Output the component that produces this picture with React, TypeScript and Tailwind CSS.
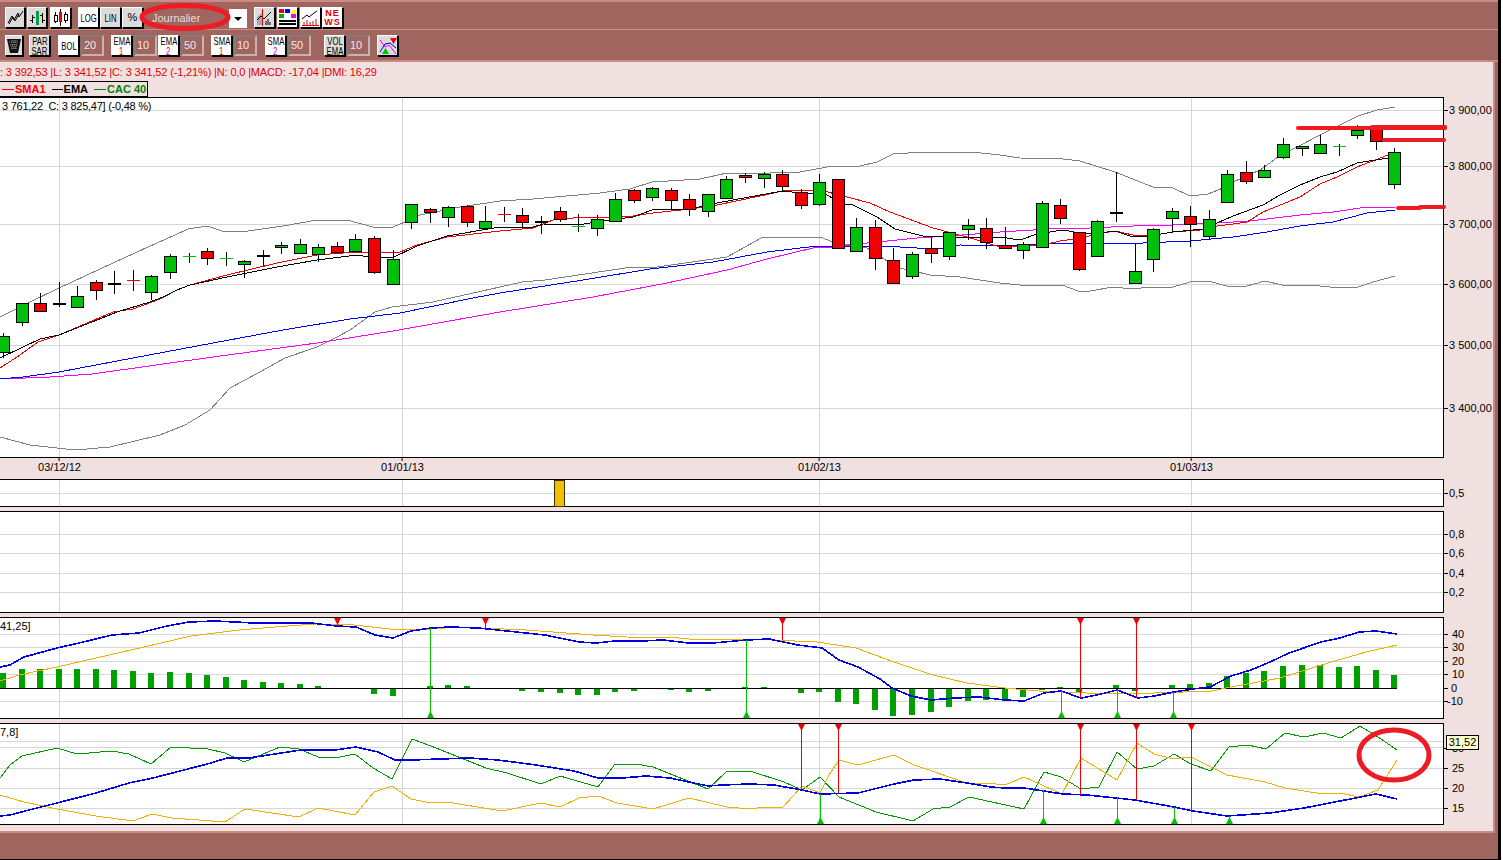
import type { ReactNode } from 'react';

type Pt = [number, number];
type Candle = [number, number, number, number, string];

const GRID_X = [59, 402, 819, 1191];

// wickTop, wickBottom, bodyTop, bodyBottom, kind (g/r body, k doji, gx/rx cross)
const candles: Candle[] = [
  [333, 358, 336, 352, 'g'], [303, 326, 303, 322, 'g'], [293, 311, 303, 311, 'r'], [282, 307, 303, 304, 'k'],
  [286, 307, 296, 307, 'g'], [280, 300, 282, 290, 'r'], [271, 294, 283, 283, 'k'], [270, 291, 280, 280, 'rx'],
  [275, 300, 276, 292, 'g'], [254, 279, 256, 272, 'g'], [253, 263, 256, 256, 'gx'], [248, 265, 251, 258, 'r'],
  [252, 266, 258, 258, 'gx'], [260, 278, 261, 264, 'g'], [250, 266, 255, 255, 'k'], [242, 254, 245, 247, 'g'],
  [239, 253, 244, 253, 'g'], [244, 262, 247, 254, 'g'], [242, 254, 246, 252, 'r'], [234, 251, 239, 251, 'g'],
  [236, 274, 238, 272, 'r'], [250, 284, 259, 284, 'g'], [204, 229, 204, 222, 'g'], [208, 223, 209, 212, 'r'],
  [206, 227, 207, 217, 'g'], [205, 227, 206, 222, 'r'], [206, 229, 221, 228, 'g'], [207, 222, 214, 214, 'rx'],
  [208, 228, 215, 222, 'r'], [216, 234, 221, 221, 'k'], [207, 222, 211, 219, 'r'], [214, 232, 226, 226, 'gx'],
  [215, 236, 219, 228, 'g'], [193, 221, 199, 221, 'g'], [189, 203, 190, 200, 'r'], [187, 201, 188, 197, 'g'],
  [188, 210, 190, 200, 'r'], [194, 216, 199, 209, 'r'], [194, 217, 194, 211, 'g'], [176, 198, 179, 198, 'g'],
  [173, 183, 175, 177, 'r'], [172, 188, 174, 178, 'g'], [170, 191, 174, 186, 'r'], [189, 209, 192, 205, 'r'],
  [174, 206, 182, 204, 'g'], [179, 248, 179, 248, 'r'], [218, 251, 227, 251, 'g'], [220, 270, 227, 258, 'r'],
  [248, 283, 260, 283, 'r'], [252, 279, 254, 276, 'g'], [238, 263, 248, 253, 'r'], [232, 260, 232, 256, 'g'],
  [219, 240, 225, 229, 'g'], [218, 249, 228, 242, 'r'], [227, 248, 245, 248, 'r'], [242, 259, 244, 250, 'g'],
  [201, 247, 203, 247, 'g'], [199, 224, 205, 218, 'r'], [232, 271, 232, 269, 'r'], [220, 257, 221, 256, 'g'],
  [172, 222, 212, 212, 'k'], [243, 283, 271, 283, 'g'], [228, 272, 229, 259, 'g'], [208, 233, 211, 218, 'g'],
  [206, 247, 216, 224, 'r'], [210, 240, 219, 236, 'g'], [170, 203, 174, 202, 'g'], [161, 184, 172, 181, 'r'],
  [165, 178, 170, 177, 'g'], [138, 159, 144, 157, 'g'], [146, 156, 146, 148, 'g'], [135, 153, 144, 153, 'g'],
  [144, 156, 146, 146, 'gx'], [125, 139, 130, 135, 'g'], [129, 150, 129, 141, 'r'], [148, 189, 152, 184, 'g'],
];

const bollUp: Pt[] = [[0,317],[28,303],[59,288],[113,263],[148,247],[175,235],[188,229],[207,226],[225,232],[248,231],[283,226],[317,220],[347,220],[373,227],[393,227],[405,222],[420,215],[460,207],[500,201],[533,199],[600,193],[630,189],[652,182],[700,179],[727,173],[740,174],[800,172],[833,166],[860,166],[877,162],[893,154],[923,152],[972,152],[1000,155],[1020,158],[1063,159],[1080,161],[1115,172],[1153,187],[1173,188],[1190,196],[1208,194],[1223,188],[1233,182],[1260,170],[1278,157],[1320,135],[1358,116],[1377,110],[1395,107]];
const bollDown: Pt[] = [[0,437],[30,445],[75,450],[110,447],[160,435],[185,425],[210,410],[230,388],[260,372],[285,358],[317,347],[337,337],[350,330],[375,312],[392,307],[433,302],[500,287],[522,282],[545,280],[632,267],[657,267],[727,257],[763,237],[820,237],[833,242],[867,248],[887,261],[900,268],[930,275],[960,277],[1000,283],[1020,285],[1062,285],[1078,291],[1090,291],[1113,287],[1133,289],[1150,287],[1173,287],[1190,282],[1208,281],[1227,286],[1247,286],[1265,281],[1282,285],[1310,285],[1330,287],[1358,287],[1373,282],[1395,276]];
const emaBlack: Pt[] = [[0,358],[23,347],[40,339],[59,335],[97,320],[117,312],[150,302],[163,297],[177,290],[190,285],[227,277],[277,267],[317,260],[357,255],[368,257],[392,258],[417,246],[447,236],[500,227],[533,227],[543,224],[577,225],[610,220],[633,217],[652,210],[690,209],[717,203],[760,195],[783,191],[800,193],[827,195],[843,204],[853,205],[877,217],[895,229],[923,236],[943,237],[1000,237],[1020,240],[1037,234],[1063,230],[1080,233],[1100,233],[1115,231],[1133,237],[1150,236],[1173,232],[1203,229],[1217,223],[1233,216],[1263,205],[1280,195],[1300,185],[1320,177],[1337,172],[1357,163],[1388,158]];
const smaRed: Pt[] = [[0,368],[17,357],[38,342],[59,335],[113,312],[133,309],[160,299],[177,290],[190,285],[227,275],[277,263],[317,255],[357,252],[400,252],[417,245],[447,237],[500,231],[533,228],[553,220],[583,217],[610,218],[633,216],[653,213],[690,209],[717,205],[760,196],[783,191],[820,190],[843,196],[870,203],[890,212],[933,228],[967,237],[1000,247],[1043,245],[1060,241],[1080,238],[1103,233],[1115,231],[1133,235],[1150,236],[1173,232],[1200,230],[1217,226],[1233,224],[1247,222],[1263,212],[1300,197],[1320,184],[1337,177],[1357,167],[1388,155]];
const ema50: Pt[] = [[0,379],[23,377],[59,372],[133,358],[213,343],[283,330],[350,319],[400,313],[473,298],[500,293],[583,280],[650,269],[713,262],[767,252],[817,246],[843,246],[883,246],[917,248],[943,248],[960,245],[1000,246],[1067,243],[1143,243],[1190,241],[1233,237],[1267,232],[1300,226],[1333,222],[1367,213],[1395,210]];
const sma50: Pt[] = [[0,379],[50,377],[92,374],[213,357],[317,343],[393,331],[500,312],[593,297],[667,283],[727,270],[767,259],[817,247],[833,247],[867,243],[917,238],[950,236],[1000,232],[1033,230],[1050,228],[1090,228],[1133,226],[1173,225],[1217,223],[1250,221],[1300,215],[1333,212],[1367,207],[1395,207]];

const macdBlue: Pt[] = [[0,667],[10,665],[24,657],[57,648],[79,643],[112,635],[139,633],[167,626],[189,622],[215,621],[254,623],[311,623],[337,626],[356,627],[375,635],[393,638],[411,631],[431,628],[450,627],[478,628],[507,631],[545,635],[579,642],[596,643],[615,641],[641,641],[663,640],[689,643],[713,643],[746,640],[769,639],[798,645],[822,648],[839,660],[858,667],[880,679],[892,688],[911,696],[931,700],[955,698],[979,697],[1005,700],[1024,701],[1044,693],[1061,691],[1081,698],[1097,695],[1117,690],[1138,698],[1154,696],[1174,692],[1193,689],[1210,687],[1231,676],[1251,670],[1270,662],[1289,653],[1321,642],[1340,638],[1359,632],[1376,631],[1397,634]];
const macdOrange: Pt[] = [[0,681],[19,675],[57,667],[96,658],[144,647],[191,636],[239,630],[287,626],[316,624],[354,625],[390,629],[431,629],[459,627],[526,630],[593,635],[627,637],[679,638],[689,639],[750,639],[817,642],[856,648],[894,662],[933,675],[967,683],[1005,688],[1039,691],[1087,693],[1154,693],[1212,691],[1231,687],[1280,678],[1328,663],[1366,652],[1397,645]];
// top/bottom of each histogram bar by candle index; 0 means no bar
const hist: number[] = [673,669,669,669,669,669,670,671,673,672,673,675,677,680,682,683,684,686,0,0,694,696,0,686,685,686,0,0,691,692,693,695,695,692,691,0,690,692,691,0,687,687,0,693,692,702,704,710,716,715,712,707,701,700,699,697,690,687,692,0,685,691,0,685,684,683,676,673,671,666,665,665,667,666,670,675];

const dmiGreen: Pt[] = [[0,778],[10,765],[22,756],[57,748],[77,754],[112,751],[129,754],[151,764],[171,747],[208,749],[225,753],[244,762],[280,747],[299,749],[318,757],[335,758],[355,754],[373,768],[392,779],[412,739],[431,746],[486,768],[507,773],[541,784],[560,776],[598,787],[615,764],[636,764],[653,767],[708,789],[727,771],[750,771],[784,782],[802,790],[820,777],[839,797],[876,812],[913,821],[933,809],[950,807],[969,797],[1024,809],[1044,772],[1061,777],[1081,789],[1099,787],[1117,752],[1137,769],[1154,766],[1174,754],[1191,764],[1211,771],[1229,747],[1248,745],[1266,749],[1285,733],[1304,737],[1323,733],[1341,738],[1360,726],[1378,737],[1397,750]];
const dmiBlue: Pt[] = [[0,816],[10,815],[29,810],[57,803],[96,793],[129,783],[153,778],[211,763],[227,758],[249,758],[301,750],[335,750],[356,747],[378,752],[395,760],[411,760],[469,758],[498,760],[536,765],[574,771],[598,778],[622,778],[646,776],[670,778],[708,786],[722,785],[750,784],[774,785],[802,790],[820,794],[858,793],[894,784],[914,780],[940,779],[967,783],[991,787],[1005,788],[1024,788],[1063,794],[1087,795],[1135,800],[1174,807],[1193,811],[1227,816],[1270,813],[1304,808],[1340,801],[1376,794],[1397,799]];
const dmiOrange: Pt[] = [[0,795],[24,802],[57,809],[96,816],[133,821],[152,814],[172,818],[225,822],[245,809],[299,817],[318,808],[355,815],[374,792],[392,786],[411,799],[431,803],[447,802],[502,811],[541,803],[560,807],[579,798],[598,796],[617,803],[653,809],[689,798],[727,807],[750,809],[764,807],[783,807],[802,786],[820,793],[829,775],[839,760],[858,765],[894,755],[914,765],[967,783],[986,783],[1005,785],[1024,777],[1062,794],[1081,758],[1117,780],[1137,743],[1154,754],[1174,759],[1191,757],[1227,775],[1265,782],[1285,788],[1323,794],[1340,793],[1359,797],[1378,790],[1397,760]];

const candleX = (i: number) => Math.round(3 + 18.55 * i);

function Line({ pts, color, w = 1 }: { pts: Pt[]; color: string; w?: number }) {
  return <polyline points={pts.map((p) => p.join(',')).join(' ')} fill="none" stroke={color} strokeWidth={w} />;
}

function Grid({ ys, top, bottom }: { ys: number[]; top: number; bottom: number }) {
  return (
    <g stroke="#d6d6d6">
      {ys.map((y) => <line key={y} x1={0} x2={1443} y1={y + 0.5} y2={y + 0.5} />)}
      {GRID_X.map((x) => <line key={x} x1={x + 0.5} x2={x + 0.5} y1={top} y2={bottom + 1} />)}
    </g>
  );
}

function DownSignal({ x, to, top }: { x: number; to: number; top: number }) {
  return (
    <g>
      <line x1={x + 0.5} x2={x + 0.5} y1={top} y2={to} stroke="#f00000" />
      <polygon points={`${x - 3},${top} ${x + 4},${top} ${x + 0.5},${top + 7}`} fill="#f00000" />
    </g>
  );
}

function UpSignal({ x, to, bottom }: { x: number; to: number; bottom: number }) {
  return (
    <g>
      <line x1={x + 0.5} x2={x + 0.5} y1={bottom} y2={to} stroke="#00c000" />
      <polygon points={`${x - 3},${bottom + 1} ${x + 4},${bottom + 1} ${x + 0.5},${bottom - 6}`} fill="#00c000" />
    </g>
  );
}

function Candles() {
  return (
    <g shapeRendering="crispEdges">
      {candles.map(([wt, wb, bt, bb, kind], i) => {
        const x = candleX(i);
        if (kind === 'gx' || kind === 'rx') {
          const c = kind === 'gx' ? '#00c000' : '#f00000';
          return (
            <g key={i}>
              <line x1={x + 0.5} x2={x + 0.5} y1={wt} y2={wb} stroke="#000" />
              <line x1={x - 6} x2={x + 7} y1={bt + 0.5} y2={bt + 0.5} stroke={c} />
            </g>
          );
        }
        if (kind === 'k') {
          return (
            <g key={i}>
              <line x1={x + 0.5} x2={x + 0.5} y1={wt} y2={wb} stroke="#000" />
              <rect x={x - 6} y={bt} width={13} height={2} fill="#000" />
            </g>
          );
        }
        return (
          <g key={i}>
            <line x1={x + 0.5} x2={x + 0.5} y1={wt} y2={wb} stroke="#000" />
            <rect x={x - 5.5} y={bt + 0.5} width={12} height={bb - bt} fill={kind === 'g' ? '#00c00c' : '#f00000'} stroke="#000" />
          </g>
        );
      })}
    </g>
  );
}

type Tick = { y: number; label: string; x?: number };

function Panel({ top, bottom, height, ticks, children, label, axisExtra }: { top: number; bottom: number; height: string; ticks: Tick[]; children: ReactNode; label?: ReactNode; axisExtra?: ReactNode }) {
  const h = bottom - top - 1;
  return (
    <div className="flex">
      <div className={`relative w-[1444px] border-y border-r border-black bg-white ${height}`}>
        <svg width={1443} height={h} viewBox={`0 ${top + 1} 1443 ${h}`} className="block overflow-visible">
          {children}
        </svg>
        {label}
      </div>
      <div className={`relative w-[51px] ${height}`}>
        {ticks.map((t) => (
          <div key={t.y} className="absolute left-0 flex h-[14px] -translate-y-1/2 items-center" style={{ top: t.y - top + 0.5 }}>
            <span className="h-px w-[4px] bg-black" />
            <span className="absolute text-[11px] leading-none whitespace-nowrap text-black" style={{ left: (t.x ?? 1449) - 1444 }}>{t.label}</span>
          </div>
        ))}
        {axisExtra}
      </div>
    </div>
  );
}

function Btn({ white, wide, className = '', children }: { white?: boolean; wide?: boolean; className?: string; children: ReactNode }) {
  return (
    <div className={`flex h-[21px] shrink-0 items-center justify-center border border-t-white border-l-white border-r-black border-b-black shadow-[1px_1px_0_#000] text-black ${wide ? 'w-[20px]' : 'w-[21px]'} ${white ? 'bg-white' : 'bg-[#dcdcdc]'} ${className}`}>
      {children}
    </div>
  );
}

// the toolbar font is a tall narrow bitmap one, so squeeze the labels
function Tiny({ children, className = '' }: { children: ReactNode; className?: string }) {
  return <span className={`inline-block scale-x-[0.7] text-[11px] leading-[10px] whitespace-nowrap ${className}`}>{children}</span>;
}

function NumBox({ value, className = '' }: { value: string; className?: string }) {
  return (
    <div className={`flex h-[21px] w-[23px] shrink-0 items-center border-2 border-t-[#7d7d7d] border-l-[#7d7d7d] border-r-[#c9b1ae] border-b-[#c9b1ae] bg-[#a0655f] pl-[1px] text-[11px] text-[#f3e6e4] ${className}`}>
      {value}
    </div>
  );
}

function StackBtn({ name, num, color, className }: { name: string; num: string; color: string; className?: string }) {
  return (
    <Btn white className={`flex-col ${className ?? ''}`}>
      <Tiny>{name}</Tiny>
      <Tiny className={color}>{num}</Tiny>
    </Btn>
  );
}

export default function App() {
  return (
    <div className="flex h-[860px] w-[1501px] flex-col overflow-hidden border-r-[3px] border-b border-black bg-[#a0655f] font-['Liberation_Sans',sans-serif]">
      <div className="flex h-[30px] items-start border-t-[2px] border-b border-t-[#cc8a84] border-b-[#c98f89] pt-[5px] pl-[5px]">
        <Btn wide>
          <svg width="17" height="15" viewBox="0 0 17 15" fill="none" stroke="#000"><path d="M1 13 L5 6 L7 10 L11 3 L12 7 L16 1" /><path d="M2 14 L6 7 L8 11 L12 4" /></svg>
        </Btn>
        <Btn wide className="ml-[2px]">
          <svg width="17" height="16" viewBox="0 0 17 16" fill="none" shapeRendering="crispEdges"><path d="M3.5 5 V13 M1 10.5 H3.5 M3.5 7.5 H6 M13.5 3 V13 M11 5.5 H13.5 M13.5 10.5 H16" stroke="#000" /><path d="M8.5 1 V15" stroke="#00a040" strokeWidth="3" /></svg>
        </Btn>
        <Btn white className="ml-[3px]">
          <svg width="17" height="17" viewBox="0 0 17 17" shapeRendering="crispEdges"><path d="M3.5 3 V14 M13.5 3 V14" stroke="#000" /><rect x="2" y="6" width="3" height="6" fill="#fff" stroke="#000" /><rect x="12" y="5" width="3" height="6" fill="#fff" stroke="#000" /><path d="M8.5 0 V17" stroke="#000" /><rect x="7" y="3" width="3" height="10" fill="#f00000" /></svg>
        </Btn>
        <Btn white className="ml-[7px]"><Tiny>LOG</Tiny></Btn>
        <Btn className="ml-px"><Tiny>LIN</Tiny></Btn>
        <Btn className="ml-px"><span className="text-[11px]">%</span></Btn>
        <div className="relative ml-[3px] mt-[2px] flex h-[19px] w-[101px] items-center justify-between">
          <div className="h-full flex-1 pl-[6px] text-[11px] leading-[19px] text-[#e8dcdc]">Journalier</div>
          <div className="flex h-full w-[18px] items-center justify-center bg-white">
            <span className="h-0 w-0 border-x-[4px] border-t-[4px] border-x-transparent border-t-black" />
          </div>
          <svg className="absolute -top-[6px] -left-[8px] overflow-visible" width="94" height="28" viewBox="0 0 94 28" fill="none">
            <ellipse cx="47" cy="14" rx="43" ry="11.5" stroke="#ed1c24" strokeWidth="5" />
          </svg>
        </div>
        <Btn className="ml-[7px]">
          <svg width="17" height="17" viewBox="0 0 17 17" fill="none"><path d="M1 16 V8 L7 3 V16 Z" fill="#a8a8a8" /><path d="M1 11 L5 7 L8 10 L15 3" stroke="#000" /><path d="M6.5 0 V17" stroke="#e00000" /><path d="M10 16 V12 M12 16 V10 M14 16 V13" stroke="#000" /></svg>
        </Btn>
        <Btn white className="ml-[2px]">
          <svg width="17" height="17" viewBox="0 0 17 17" shapeRendering="crispEdges"><rect x="0" y="0" width="5" height="4" fill="#e00000" /><rect x="6" y="0" width="5" height="4" fill="#0000e0" /><rect x="12" y="1" width="5" height="4" fill="#ffff00" /><rect x="0" y="5" width="5" height="4" fill="#00b000" /><rect x="12" y="5" width="5" height="4" fill="#ff00ff" /><path d="M0 12 H17 M0 15 H17" stroke="#000" strokeWidth="1.5" /></svg>
        </Btn>
        <Btn white className="ml-[2px]">
          <svg width="17" height="17" viewBox="0 0 17 17" fill="none"><path d="M0 10 L5 6 L7 8 L12 4 L15 2" stroke="#000" /><path d="M2 16 V13 M5 16 V11 M8 16 V13 M11 16 V12 M14 16 V10 M0 16.5 H17" stroke="#e00000" /></svg>
        </Btn>
        <Btn white className="ml-[1px] flex-col">
          <span className="text-[9px] leading-[9px] font-bold tracking-[1px] text-[#e00000]">NE</span>
          <span className="text-[9px] leading-[9px] font-bold tracking-[1px] text-[#e00000]">WS</span>
        </Btn>
      </div>
      <div className="flex h-[32px] items-start border-b-[2px] border-b-[#cc8a84] pt-[5px] pl-[5px]">
        <Btn className="w-[18px]!">
          <svg width="14" height="16" viewBox="0 0 14 16"><path d="M0 1 H14 L11 15 H3 Z" fill="#111" /><path d="M2 4 H12 M3 7 H11 M4 10 H10 M5 2 V12 M7 2 V12 M9 2 V12" stroke="#9a9a9a" strokeDasharray="1 1" /></svg>
        </Btn>
        <Btn className="ml-[6px] flex-col">
          <Tiny>PAR</Tiny>
          <Tiny>SAR</Tiny>
        </Btn>
        <Btn white className="ml-[8px]"><Tiny>BOL</Tiny></Btn>
        <NumBox value="20" className="ml-[2px]" />
        <StackBtn name="EMA" num="1" color="text-[#f00000]" className="ml-[7px]" />
        <NumBox value="10" className="ml-[2px]" />
        <StackBtn name="EMA" num="2" color="text-[#c000c0]" className="ml-[1px]" />
        <NumBox value="50" className="ml-[2px]" />
        <StackBtn name="SMA" num="1" color="text-[#f00000]" className="ml-[7px]" />
        <NumBox value="10" className="ml-[2px]" />
        <StackBtn name="SMA" num="2" color="text-[#c000c0]" className="ml-[8px]" />
        <NumBox value="50" className="ml-[2px]" />
        <Btn className="ml-[13px] flex-col">
          <Tiny>VOL</Tiny>
          <Tiny>EMA</Tiny>
        </Btn>
        <NumBox value="10" className="ml-[2px]" />
        <Btn className="ml-[7px]">
          <svg width="18" height="18" viewBox="0 0 18 18" fill="none"><path d="M1 3 L6 10 L10 8 L17 17" stroke="#ff00ff" /><path d="M1 15 L6 7 L11 6 L17 11" stroke="#0000e0" /><polygon points="11,1 18,1 14.5,7" fill="#f00000" /><polygon points="3,17 10,17 6.5,11" fill="#00c000" /></svg>
        </Btn>
      </div>

      <div className="mr-[3px] flex flex-1 flex-col border-r-[2px] border-b-[2px] border-r-[#cc8a84] border-b-[#cc8a84] bg-[#f0e0e0] pt-[3px]">
        <div className="h-[15px] text-[11px] leading-[15px] tracking-[-0.15px] whitespace-pre text-[#e00000]">: 3 392,53 |L: 3 341,52 |C: 3 341,52 (-1,21%) |N: 0,0 |MACD: -17,04 |DMI: 16,29</div>
        <div className="mt-[1px] flex h-[16px] w-[148px] items-center border-y border-r border-black pl-[2px] text-[11px] font-bold whitespace-nowrap">
          <span className="mr-px h-px w-[12px] bg-[#f00000]" />
          <span className="mr-[6px] text-[#f00000]">SMA1</span>
          <span className="mr-px h-px w-[11px] bg-black" />
          <span className="mr-[6px] text-black">EMA</span>
          <span className="mr-px h-px w-[12px] bg-[#008000]" />
          <span className="text-[#008000]">CAC 40</span>
        </div>
        <Panel
          top={97}
          bottom={457}
          height="h-[361px]"
          ticks={[
            { y: 110, label: '3 900,00' }, { y: 166, label: '3 800,00' }, { y: 224, label: '3 700,00' },
            { y: 284, label: '3 600,00' }, { y: 345, label: '3 500,00' }, { y: 408, label: '3 400,00' },
          ]}
          label={<span className="absolute top-[1px] left-[2px] text-[11px] leading-[14px] tracking-[-0.25px] whitespace-pre text-black">3 761,22  C: 3 825,47] (-0,48 %)</span>}
        >
          <Grid ys={[110, 166, 224, 284, 345, 408]} top={98} bottom={456} />
          <g shapeRendering="crispEdges">
            <Line pts={bollUp} color="#808080" />
            <Line pts={bollDown} color="#808080" />
            <Line pts={sma50} color="#ff00ff" />
            <Line pts={ema50} color="#0000f0" />
            <Line pts={smaRed} color="#f00000" />
            <Line pts={emaBlack} color="#000000" />
          </g>
          <Candles />
          <g stroke="#ed1c24" strokeWidth="4" strokeLinecap="round">
            <line x1={1298} y1={128} x2={1445} y2={128} />
            <line x1={1372} y1={127} x2={1445} y2={127} />
            <line x1={1384} y1={140} x2={1444} y2={140} />
            <line x1={1398} y1={208} x2={1420} y2={208} />
            <line x1={1420} y1={207} x2={1444} y2={207} />
          </g>
        </Panel>

        <div className="relative h-[21px] w-[1444px]">
          {[['03/12/12', 59], ['01/01/13', 402], ['01/02/13', 819], ['01/03/13', 1191]].map(([text, x]) => (
            <div key={text} className="absolute top-0 flex -translate-x-1/2 flex-col items-center" style={{ left: Number(x) + 0.5 }}>
              <span className="h-[3px] w-px bg-black" />
              <span className="text-[11px] leading-[13px] text-black">{text}</span>
            </div>
          ))}
        </div>

        <Panel top={479} bottom={506} height="h-[28px]" ticks={[{ y: 493, label: '0,5' }]}>
          <Grid ys={[493]} top={480} bottom={505} />
          <rect x={554.5} y={480.5} width={10} height={26} fill="#f0c000" stroke="#3a3000" shapeRendering="crispEdges" />
        </Panel>

        <div className="mt-[4px]">
          <Panel
            top={511}
            bottom={612}
            height="h-[102px]"
            ticks={[{ y: 534, label: '0,8' }, { y: 553, label: '0,6' }, { y: 573, label: '0,4' }, { y: 592, label: '0,2' }]}
          >
            <Grid ys={[534, 553, 573, 592]} top={512} bottom={611} />
          </Panel>
        </div>

        <div className="mt-[4px]">
          <Panel
            top={617}
            bottom={718}
            height="h-[102px]"
            ticks={[
              { y: 634, label: '40', x: 1452 }, { y: 647, label: '30', x: 1452 }, { y: 661, label: '20', x: 1452 },
              { y: 674, label: '10', x: 1452 }, { y: 688, label: '0', x: 1451 }, { y: 701, label: '-10', x: 1447 },
            ]}
            label={<span className="absolute top-[1px] left-0 text-[11px] leading-[14px] text-black">41,25]</span>}
          >
            <Grid ys={[634, 647, 661, 674, 701]} top={618} bottom={717} />
            <g shapeRendering="crispEdges">
              {hist.map((y, i) => y === 0 ? null : (
                <rect key={i} x={candleX(i) - 3} y={Math.min(y, 688)} width={6} height={Math.abs(y - 688)} fill="#00a000" />
              ))}
              <line x1={0} x2={1397} y1={688.5} y2={688.5} stroke="#000" />
              <Line pts={macdOrange} color="#f0b000" />
              <Line pts={macdBlue} color="#0000e0" w={1.6} />
            </g>
            {[[337, 626], [485, 629], [782, 640], [1080, 698], [1136, 698]].map(([x, to]) => <DownSignal key={x} x={x} to={to} top={618} />)}
            {[[430, 628], [746, 640], [1061, 691], [1117, 690], [1173, 692]].map(([x, to]) => <UpSignal key={x} x={x} to={to} bottom={717} />)}
          </Panel>
        </div>

        <div className="mt-[4px]">
          <Panel
            top={723}
            bottom={824}
            height="h-[102px]"
            ticks={[{ y: 748, label: '30', x: 1452 }, { y: 768, label: '25', x: 1452 }, { y: 788, label: '20', x: 1452 }, { y: 808, label: '15', x: 1452 }]}
            label={<span className="absolute top-[1px] left-0 text-[11px] leading-[14px] text-black">7,8]</span>}
            axisExtra={<div className="absolute top-[12px] left-[2px] z-10 h-[15px] w-[33px] border border-black bg-[#ffffcc] text-center text-[11px] leading-[13px] text-black">31,52</div>}
          >
            <Grid ys={[741, 747, 768, 788, 808]} top={724} bottom={823} />
            <g shapeRendering="crispEdges">
              <Line pts={dmiGreen} color="#009a00" />
              <Line pts={dmiOrange} color="#f0b000" />
              <Line pts={dmiBlue} color="#0000e0" w={1.6} />
            </g>
            {[[801, 790], [838, 793], [1080, 795], [1136, 800], [1191, 811]].map(([x, to]) => <DownSignal key={x} x={x} to={to} top={724} />)}
            {[[820, 794], [1043, 790], [1117, 797], [1174, 807], [1229, 816]].map(([x, to]) => <UpSignal key={x} x={x} to={to} bottom={823} />)}
            <ellipse cx={1394} cy={755} rx={35} ry={25} fill="none" stroke="#ed1c24" strokeWidth={5} />
          </Panel>
        </div>
      </div>

      <div className="h-[26px] shrink-0" />
    </div>
  );
}
